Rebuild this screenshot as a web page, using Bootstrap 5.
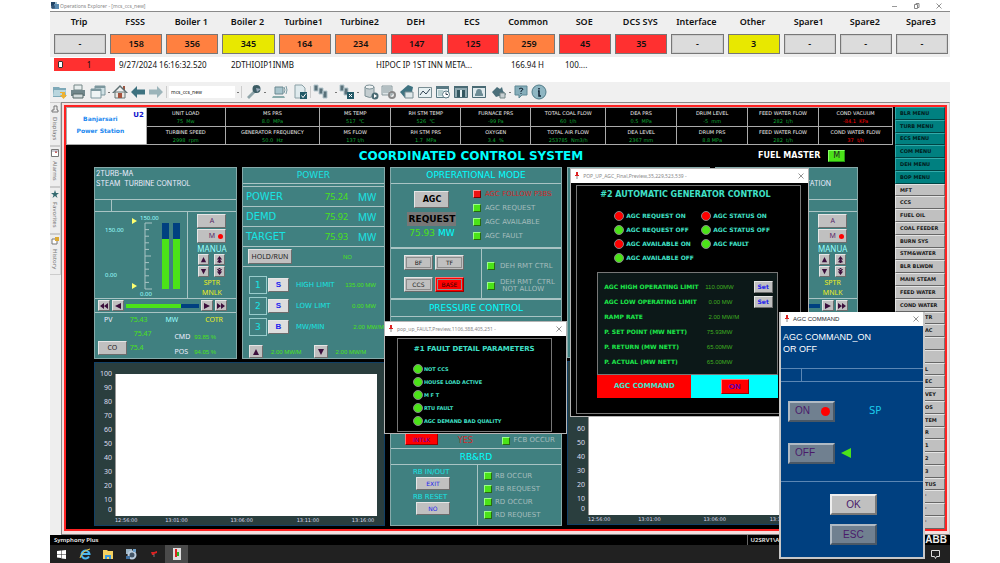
<!DOCTYPE html>
<html lang="en">
<head>
<meta charset="utf-8">
<meta name="viewport" content="width=device-width, initial-scale=1">
<title>Operations Explorer - [mcs_ccs_new]</title>
<link href="https://cdn.jsdelivr.net/npm/bootstrap@5.3.0/dist/css/bootstrap.min.css" rel="stylesheet">
<style>
body{background:#fff;font-family:"Noto Sans","Open Sans",sans-serif;font-size:7px;line-height:10px;color:#111}
svg{display:block;flex:none}
button{font:inherit;padding:0;cursor:pointer}
.app{width:90%;margin:0 auto;position:relative}
.nw{white-space:nowrap}
.vd{font-family:"DejaVu Sans",sans-serif}
.ar{font-family:"Liberation Sans",Arial,sans-serif}
.f5{font-size:5px}.f6{font-size:6px}.f7{font-size:7px}.f8{font-size:8px}.f9{font-size:9px}.f10{font-size:10px}.f12{font-size:12px}
.cy{color:#0ff}.cy2{color:#18e4e4}.pale{color:#9ff}.gn{color:#4be318}.ye{color:#ee2}.gy{color:#a5bdbd}.wt{color:#eef}
/* window chrome */
.titlebar{height:12px;border-bottom:1px solid #8a8a8a;color:#888}
.alarms{display:grid;grid-template-columns:repeat(16,minmax(0,1fr));background:#efefef;height:45px;padding-left:2px}
.alarm-label{height:20px;line-height:20px;font-size:9px;font-weight:600;color:#111;padding-right:2px}
.alarm-key{width:calc(100% - 4px);height:20px;border:1px solid #777;outline:1px solid #ccc;outline-offset:-2px;font-size:9px;font-weight:600;background:#dcdcdc;margin-top:2px;color:#111}
.or{background:#ff8040;outline:0}.yl{background:#e8e800;outline:0}.rd{background:#ff3030;outline:0}
.alarm-line{display:grid;grid-template-columns:61fr 112fr 145fr 135fr 54fr 389fr;height:25px;padding:1px 0 0 4px;font-size:8px;line-height:13px;background:#fff}
.alarm-id{background:#ff3030;height:13px}
.alarm-id input{appearance:none;width:5px;height:7px;margin:0;border:1px solid #333;border-radius:1px;background:#fff}
.tools{height:20px;background:#f0f0f0;padding-left:2px;gap:2px}
.tools button{border:0;background:none;width:16px;height:16px;flex:none}
.tools input{width:66px;height:12px;border:0;background:#fff;font-size:5px;padding:0 2px;color:#222}
.tools .sp{margin-left:2px}
.caret{width:2px;height:1px;background:#777}
.rule{width:1px;height:12px;background:#ccc}
/* side tabs and page frame */
.side{width:11px;background:#eee;color:#8a8a8a}
.side a{writing-mode:vertical-rl;color:#777;text-decoration:none;font-size:6px;border:1px solid #ccc;border-left:0;line-height:8px;padding:2px 0 5px}
.frame{border:1px solid #888;border-right-color:#ccc;background:#f4dede;padding:2px 2px 3px}
.redline{border:2px solid #f22;background:#000}
.board{margin-right:2px}
.readings{display:grid;grid-template-columns:80fr 79fr 95fr 71fr 70fr 70fr 75fr 71fr 71fr 71fr 74fr;gap:1px;background:#aaa;height:38px;padding:1px}
.readings>div{background:#000;text-align:center;overflow:hidden}
.readings .pair{display:grid;grid-template-rows:1fr 1fr;gap:1px;background:#aaa}
.pair>div{background:#000;font-size:5px;line-height:8px;color:#eee;padding-top:1px}
.pair b{display:block;font-weight:400;color:#10a836;font-size:5px}
.pair b.neg{color:#f00}
.readings>.station{background:#fff;color:#1a88f0;font-weight:700;font-size:6px;position:relative;line-height:12px;padding-top:5px;padding-right:12px}
.station span{position:absolute;right:2px;top:1px;color:#11c;font-size:7px}
.menu{width:50px;flex:none}
.menu button{flex:1 1 0;border:1px solid;border-color:#e4e4e4 #777 #666 #e4e4e4;background:#c0c0c0;text-align:left;padding-left:4px;font:700 5px/9px "DejaVu Sans",sans-serif;color:#1a1a1a;min-height:0;white-space:nowrap}
.menu .grp{background:#008080;border-color:#3aa #055 #044 #3aa;color:#001c1c}
.menu .tail{padding-left:29px}
.heading-row{height:22px;display:grid;grid-template-columns:692fr 135fr;align-items:center}
.main-title{padding-left:118px}
.work{display:grid;grid-template-columns:291fr 172fr 291fr;gap:5px;padding:0 35px 3px 28px}
.duo{display:grid;grid-template-columns:1fr 1fr;gap:5px;margin-bottom:3px}
.teal{background:#408080;border:1px solid #86aaaa;min-width:0}
.ln{border-bottom:1px solid #a9c4c4}
.key{background:#c0c0c0;border:1px solid;border-color:#e6e6e6 #6c6c6c #6c6c6c #e6e6e6;color:#222;display:flex;align-items:center;justify-content:center;white-space:nowrap;flex:none}
.gomode{width:17px;height:12px;background:#4be318;border-color:#8f6 #291 #291 #8f6;font:8px/8px "DejaVu Sans",sans-serif}
.plum{color:#5a2a6a}
.k11{width:12px;height:11px}
/* turbine station */
.st-head{height:32px;padding:1px;font-family:Inter,sans-serif;font-size:7px;color:#eef}
.st-tag{height:12px}
.st-tag i{display:block;width:17px;height:100%;border-right:1px solid #a9c4c4}
.st-body{height:87px;display:grid;grid-template-columns:92fr 50fr}
.st-keys{border-left:1px solid #a9c4c4;padding-top:2px}
.mk{width:29px;height:14px;position:relative}
.mk i{position:absolute;right:2px;width:5px;height:5px;border-radius:50%;background:red}
.mk+.mk{margin:1px 0}
.arrows{display:grid;grid-template-columns:11px 11px;gap:1px 5px;margin-bottom:1px}
.arrows .key{height:11px}
.st-slide{height:14px;padding:0 9px 0 3px;gap:2px}
.slide{height:4px;background:#004080}
.slide i{display:block;height:4px;background:#4be318;width:76%}
.st-foot{height:44px;display:grid;grid-template-columns:35fr 36fr 40fr 31fr;grid-template-rows:14px 14px 14px;align-items:center}
.st-foot .wt{padding-left:9px}
.co{width:29px;height:14px;margin-left:3px}
.row2{padding-top:6px}.row3{padding-top:8px}
.sm{margin-left:-11px}
/* power */
.pt{height:16px;line-height:14px}
.gapline{height:3px}
.pw-row{display:grid;grid-template-columns:82fr 34fr 27fr;align-items:center;padding-left:3px;height:20px}
.num,.mw{font-family:"Noto Sans",sans-serif;font-size:9px}
.mw{font-size:10px}
.hold{width:44px;height:15px;margin-left:2px;font-family:"Noto Sans",sans-serif;font-size:7px}
.nos{margin-left:-15px}
.lims{padding-top:7px}
.lim{display:grid;grid-template-columns:19px 21px 7px 1fr auto;align-items:center;height:21px;padding-left:6px}
.lim>i{font-style:normal;border:1px solid #9cc;width:18px;height:18px;line-height:17px;text-align:center;display:block}
.sk{width:21px;height:14px;background:#ddd;color:#22e;font:700 8px "Liberation Sans",sans-serif}
.ramp{padding:8px 0 0 6px;gap:8px}
.rk{width:14px;height:13px}
.ramp span+.rk{margin-left:4px}
/* mode panel */
.led{width:8px;height:8px;background:#4be318;border:1px solid;border-color:#9f8 #286a10 #286a10 #9f8;display:block;flex:none}
.led.hot{background:#e11;border-color:#f99 #700 #700 #f99}
.dot{width:10px;height:10px;border-radius:50%;background:#4be318;border:1px solid #888;display:block;flex:none}
.dot.hot{background:red}
.alert-red{color:#d02828}
.insk{width:29px;height:15px;outline:1px solid #8d8d8d;outline-offset:-3px}
.redk{background:red;color:#300;border-color:#f77 #900 #900 #f77}
.modes{height:65px;display:grid;grid-template-columns:82fr 88fr;border-bottom-width:2px}
.agc{width:35px;height:17px;margin-top:7px;margin-bottom:4px;color:#000}
.req{background:#777;border:0;color:#000;width:49px;height:14px;margin-bottom:2px}
.leds{display:grid;grid-template-columns:12px 1fr;align-content:start;align-items:center;grid-auto-rows:14px;font-size:7px;color:#a5bdbd;padding-top:3px}
.split{height:51px;display:grid;grid-template-columns:91fr 79fr;border-bottom-width:2px}
.quad{display:grid;grid-template-columns:29px 29px;grid-auto-rows:15px;gap:7px 2px;padding:6px 0 0 13px;border-right:1px solid #a9c4c4}
.quad .key{font-size:6px}
.leds2{display:grid;grid-template-columns:13px 1fr;align-items:center;padding:7px 0 0 5px;font-size:7px;line-height:7px;color:#a5bdbd;grid-auto-rows:20px;align-content:start}
.pc{height:17px;line-height:17px}
.hid{height:132px;display:grid;grid-template-columns:58fr 48fr 12px 52fr;align-items:end;padding:0 0 3px 14px;line-height:9px}
.ik{width:33px;height:12px;font-size:6px;color:#50b}
.rbt{height:16px;line-height:16px}
.rb{display:grid;grid-template-columns:87fr 83fr}
.rb-keys{padding:3px 0 0 22px;line-height:9px;border-right:1px solid #a9c4c4}
.bk{width:34px;height:13px;color:#22e;font-size:6px;margin-left:3px}
.rs{margin-top:3px}
.leds3{display:grid;grid-template-columns:11px 1fr;grid-auto-rows:13px;align-items:center;padding:4px 0 0 6px;font-size:7px;color:#a5bdbd}
/* trend chart */
.trend{background:#2a3e3e;border:1px solid #124066;height:164px;display:grid;grid-template-columns:20px 1fr 7px;grid-template-rows:11px 142px 9px;color:#dde}
.trend ol{list-style:none;margin:-7px 0 0;padding:0 3px 0 0;text-align:right;font-size:7px}
.trend li{height:14px;line-height:14px}
.trend li:last-child{height:5px;line-height:5px}
.plot{background:#fff;border-left:1px solid #999}
.times{display:grid;grid-template-columns:50fr 65fr 66fr 55fr 25fr;grid-column:2;font-size:5px;line-height:9px}
/* floating windows */
.pop{position:absolute;border:1px solid #b5b5b5;background:#000;z-index:3}
.pop-bar{background:#fff;color:#888;font-size:6px;padding:0 4px;height:14px}
.pop-bar button{border:0;background:none}
.inner{border:1px solid #777}
.aq{color:#40e0c8;font-weight:700}
.win-agc{left:57.8%;top:168px;width:26.5%;height:249px}
.win-fault{left:37.1%;top:321px;width:20.3%;height:113px}
.win-cmd{left:81%;top:312px;width:16.2%;height:247px;background:#004080;border:2px solid #c8c8c8;border-top-width:0;z-index:4}
.agcbox{margin:2px 7px 0 5px;height:229px}
.agct{margin-top:4px;padding-right:6px}
.lamps{display:grid;grid-template-columns:12px 75px 12px 1fr;grid-auto-rows:14px;align-items:center;padding:9px 0 0 37px;height:81px;align-content:start}
.limbox{margin:-9px 22px 0 20px;height:103px;padding:6px 4px 0 6px}
.limits{background:#0c1818;color:#1de84a;font-weight:700}
.limits td{padding:0;height:15px;line-height:14px}
.limits td+td{color:#3fae20;font-weight:400}
.limits td:first-child{width:101px}
.limits td:last-child{width:19px}
.setk{width:19px;height:12px;color:#22e;font:700 6px "DejaVu Sans",sans-serif}
.cmdrow{display:grid;grid-template-columns:94fr 86fr;height:23px;margin:0 22px 0 20px;text-align:center;line-height:22px}
.cmd-name{background:red}
.cmd-state{background:#0ff;display:flex;align-items:center;justify-content:center}
.onk{width:28px;height:15px;color:#50b}
.fbox{margin:2px 14px 0 12px;height:94px}
.ft{margin-top:5px}
.flamps{display:grid;grid-template-columns:11px 1fr;grid-auto-rows:13px;align-items:center;padding:8px 0 0 15px}
.ct{line-height:12px;padding:5px 0 0 2px;height:42px}
.ctag{height:14px;border:solid #5a86b4;border-width:1px 0}
.ctag i{display:block;width:21px;height:100%;border-right:1px solid #5a86b4}
.cbody{height:100px;display:grid;grid-template-columns:53px 1fr;grid-auto-rows:42px;align-items:center;align-content:start;padding:8px 0 0 7px;border-bottom:1px solid #5a86b4;color:#1cc8e8;font-size:10px}
.cbody span{padding-left:28px}
.big{width:47px;height:21px;font-size:10px;color:#4a1a6a;background:#708090;border-width:2px;border-color:#b0bac4 #4a5866 #4a5866 #b0bac4}
.cbody .big{justify-content:flex-start;padding-left:5px}
.big .dot{margin-left:11px;width:9px;height:9px}
.cend{gap:9px;padding:12px 0 0 3px}
.okk{background:#c0c0c0;border-color:#eee #777 #777 #eee}
/* status line and taskbar */
.status{height:10px;background:#000;color:#eee;font-size:6px;font-weight:600}
.srv{margin-left:auto;margin-right:146px;border-left:1px solid #666;padding-left:3px}
.abb{font-weight:700;font-size:10px;padding-right:3px}
.taskbar{height:19px;background:#212121}
.taskbar button{width:23px;height:19px;border:0;border-bottom:1px solid #6ab0ea;background:none;display:flex;align-items:center;justify-content:center}
.taskbar .on{background:#4a4a4a}
</style>
</head>
<body>
<svg width="0" height="0" class="position-absolute" aria-hidden="true">
<symbol id="up" viewBox="0 0 8 8"><path d="M4 1 7 7H1z" fill="#3c0f3c"/></symbol>
<symbol id="dn" viewBox="0 0 8 8"><path d="M4 7 7 1H1z" fill="#3c0f3c"/></symbol>
<symbol id="up2" viewBox="0 0 8 8"><path d="M4 0 7 4H1zM4 3 7 7H1zM3 6h2v2H3z" fill="#3c0f3c"/></symbol>
<symbol id="dn2" viewBox="0 0 8 8"><path d="M4 8 7 4H1zM4 5 7 1H1zM3 0h2v2H3z" fill="#3c0f3c"/></symbol>
<symbol id="lt" viewBox="0 0 8 8"><path d="M1 4 7 1v6z" fill="#3c0f3c"/></symbol>
<symbol id="rt" viewBox="0 0 8 8"><path d="M7 4 1 1v6z" fill="#3c0f3c"/></symbol>
<symbol id="lt2" viewBox="0 0 8 8"><path d="M0 4 4 1v6zM4 4 8 1v6z" fill="#3c0f3c"/></symbol>
<symbol id="rt2" viewBox="0 0 8 8"><path d="M8 4 4 1v6zM4 4 0 1v6z" fill="#3c0f3c"/></symbol>
<symbol id="x" viewBox="0 0 6 6"><path d="M.5.5 5.5 5.5M5.5.5.5 5.5" stroke="#777" stroke-width=".8"/></symbol>
<symbol id="pin" viewBox="0 0 4 8"><path d="M1 0h2v3h1v1H0V3h1z" fill="#d22"/><path d="M2 4v3" stroke="#888"/></symbol>
<symbol id="gauge" viewBox="0 0 92 86">
<path d="M57 11H50V77H57M50 17.600h4M50 24.200h4M50 30.800h4M50 37.400h4M50 44h6M50 50.600h4M50 57.200h4M50 63.800h4M50 70.400h4" fill="none" stroke="#a9c4c4"/>
<path d="M37 6v6l5-3zM37 71v6l5-3z" fill="#ffff70"/>
<path d="M67 11h7v66h-7zM78 11h7v66h-7z" fill="#004080"/><path d="M67 27h7v50h-7zM78 27h7v50h-7z" fill="#4be318"/>
</symbol>
</svg>

<div class="app" id="app">
<header>
 <div class="titlebar d-flex align-items-center nw pe-2">
  <svg width="10" height="9" viewBox="0 0 10 9"><path d="M1 1h4v4H1z" fill="#246"/><path d="M4 3h5v5H4z" fill="#5a8ab0"/><circle cx="3" cy="6" r="2" fill="#357"/><path d="M5 1h2v2H5z" fill="#9bc"/></svg>
  <span class="f5">Operations Explorer - [mcs_ccs_new]</span>
  <span class="ms-auto d-flex gap-3 align-items-center"><svg width="6" height="6"><path d="M0 3.500h5" stroke="#999"/></svg><svg width="6" height="6"><path d="M.5 1.500h3v4h-3zM2 1.500v-1h3v4H4" fill="none" stroke="#888"/></svg><svg width="6" height="6"><use href="#x"/></svg></span>
 </div>
 <div class="alarms text-center">
  <div><div class="alarm-label">Trip</div><button class="alarm-key">-</button></div>
  <div><div class="alarm-label">FSSS</div><button class="alarm-key or">158</button></div>
  <div><div class="alarm-label">Boiler 1</div><button class="alarm-key or">356</button></div>
  <div><div class="alarm-label">Boiler 2</div><button class="alarm-key yl">345</button></div>
  <div><div class="alarm-label">Turbine1</div><button class="alarm-key or">164</button></div>
  <div><div class="alarm-label">Turbine2</div><button class="alarm-key or">234</button></div>
  <div><div class="alarm-label">DEH</div><button class="alarm-key rd">147</button></div>
  <div><div class="alarm-label">ECS</div><button class="alarm-key rd">125</button></div>
  <div><div class="alarm-label">Common</div><button class="alarm-key or">259</button></div>
  <div><div class="alarm-label">SOE</div><button class="alarm-key rd">45</button></div>
  <div><div class="alarm-label">DCS SYS</div><button class="alarm-key rd">35</button></div>
  <div><div class="alarm-label">Interface</div><button class="alarm-key">-</button></div>
  <div><div class="alarm-label">Other</div><button class="alarm-key yl">3</button></div>
  <div><div class="alarm-label">Spare1</div><button class="alarm-key">-</button></div>
  <div><div class="alarm-label">Spare2</div><button class="alarm-key">-</button></div>
  <div><div class="alarm-label">Spare3</div><button class="alarm-key">-</button></div>
 </div>
 <div class="alarm-line nw">
  <label class="alarm-id d-flex align-items-center ps-1"><input type="checkbox" class="flex-shrink-0"><span class="flex-fill text-center">1</span></label>
  <span class="ps-1">9/27/2024 16:16:32.520</span><span class="ps-1">2DTHIOIP1INMB</span><span class="ps-1">HIPOC IP 1ST INN META...</span><span class="ps-1">166.94 H</span><span class="ps-1">100....</span>
 </div>
 <div class="tools d-flex align-items-center">
  <button aria-label="Open"><svg width="16" height="16"><path d="M1 3h6l1 1h6v9H1z" fill="#7ea9b8"/><path d="M2 6h12l-1 6H1z" fill="#b9d6de"/><path d="M8 8h5v3h2l-3.500 4L8 11h2V9H8z" fill="#eeb030"/></svg></button>
  <button aria-label="Print"><svg width="16" height="16"><path d="M4 1h8v5H4z" fill="#e8eeee" stroke="#788"/><path d="M1 6h14v6H1z" fill="#71868a"/><path d="M3 10h10v4H3z" fill="#d5dddd" stroke="#566"/></svg></button>
  <button aria-label="Windows" class="sp"><svg width="16" height="16"><path d="M5 2h10v9H5z" fill="#cfe0e4" stroke="#7c979e"/><path d="M1 5h10v9H1z" fill="#eef4f5" stroke="#7c979e"/><path d="M1 5h10v2H1zM5 2h10v2H5z" fill="#7c979e"/></svg></button><i class="caret"></i>
  <button aria-label="Home"><svg width="16" height="16"><path d="M3 8h10v6H3z" fill="#e8e6e2" stroke="#677"/><path d="M11 2h2v4h-2z" fill="#9a5540"/><path d="M8 1 0 9h2l6-6 6 6h2z" fill="#5d6f72"/><path d="M6 9h4v5H6z" fill="#a5523c"/></svg></button>
  <button aria-label="Back"><svg width="16" height="16"><path d="M1 8l6-6v3.500h8v5H7V14z" fill="#3e7280"/></svg></button>
  <button aria-label="Forward"><svg width="16" height="16"><path d="M15 8 9 2v3.500H1v5h8V14z" fill="#9cb4ba"/></svg></button><i class="rule"></i>
  <input type="text" value="mcs_ccs_new" aria-label="Display"><i class="caret"></i><i class="rule"></i>
  <button aria-label="Tools" class="sp"><svg width="16" height="16"><path d="M1 13 8 6l2 2-7 7z" fill="#8fa5aa"/><circle cx="10.500" cy="5" r="4" fill="#3c5c64"/><path d="M10 4l5 1-4 3z" fill="#9ab"/></svg></button><i class="caret"></i>
  <button aria-label="Terminal" class="ms-1"><svg width="16" height="16"><path d="M3 3h8v7H3z" fill="#a8c4cc" stroke="#6a8890"/><path d="M1 12h11l1 2H0z" fill="#8aa"/><path d="M12 3q2 3 0 6M14 2q2 4 0 8" stroke="#7a9aa2" fill="none"/></svg></button>
  <button aria-label="Document check" class="sp"><svg width="16" height="16"><path d="M3 1h7l3 3v10H3z" fill="#dfeaed" stroke="#8aa0a6"/><path d="M8 8h7v7H8z" fill="#235a68"/><path d="m9.500 11.500 1.500 2 3-4" stroke="#fff" fill="none"/></svg></button><i class="rule"></i>
  <button aria-label="Tree"><svg width="16" height="16"><path d="M1 1h4v6H1zM6 4h4v6H6zM10 7h4v7h-4z" fill="#59717a" stroke="#b4c6cc"/></svg></button><i class="caret ms-1"></i>
  <button aria-label="Tree remove"><svg width="16" height="16"><path d="M1 1h4v6H1zM5 4h4v7H5z" fill="#59717a" stroke="#b4c6cc"/><path d="M8 8h7v7H8z" fill="#235a68"/><path d="m10 10 3 3m0-3-3 3" stroke="#fff"/></svg></button><i class="caret"></i>
  <button aria-label="Database" class="sp"><svg width="16" height="16"><path d="M2 3v9q5 3 9 0V3z" fill="#c3cdd0" stroke="#7a8e94"/><ellipse cx="6.500" cy="3" rx="4.500" ry="2" fill="#eef2f3" stroke="#7a8e94"/><circle cx="12" cy="12" r="3.500" fill="#4a6a72"/><path d="M11 10v4l3-2z" fill="#fff"/></svg></button>
  <button aria-label="Settings list"><svg width="16" height="16"><path d="M1 2h10v9H1z" fill="#dde4e6" stroke="#8a9a9e"/><path d="M2 4h8M2 6h8M2 8h6" stroke="#8a9a9e"/><circle cx="11" cy="11" r="3" fill="none" stroke="#888" stroke-width="2"/></svg></button>
  <button aria-label="Tags"><svg width="16" height="16"><path d="M1 8 9 1l5 2-1 5-7 6z" fill="#3e7280"/><path d="M6 8h8v6H6z" fill="#dfe8ea" stroke="#7a8e94"/></svg></button>
  <button aria-label="Trend"><svg width="16" height="16"><path d="M1.500 3.500h13v10h-13z" fill="#e6f0f2" stroke="#7a8e94"/><path d="m3 11 3-4 3 3 4-5" stroke="#345" fill="none"/></svg></button>
  <button aria-label="Event list"><svg width="16" height="16"><path d="M1.500 2.500h12v11h-12z" fill="#e6f0f2" stroke="#5a7a84"/><path d="M1 2h13v3H1z" fill="#5a7a84"/><path d="M3 7h5M3 9h4M3 11h4" stroke="#8aa"/><circle cx="11" cy="10.500" r="3.500" fill="#fff" stroke="#5a7a84"/><path d="M11 8.500v2h2" stroke="#345" fill="none"/></svg></button>
  <button aria-label="System"><svg width="16" height="16"><path d="M1.500 2.500h13v11h-13z" fill="#8fa9b1" stroke="#4a6a74"/><path d="M1 2h14v2H1z" fill="#4a6a74"/><path d="M4 6h8v7H4z" fill="#33565f"/><path d="M7 6h2v7H7z" fill="#e6f0f2"/></svg></button>
  <button aria-label="Alarm page"><svg width="16" height="16"><path d="M1.500 2.500h13v11h-13z" fill="#dfe9ec" stroke="#4a6a74"/><path d="M1 2h14v2H1z" fill="#4a6a74"/><path d="M4 12v-2l1-1q0-4 3-4t3 4l1 1v2z" fill="#6d8c95"/></svg></button>
  <button aria-label="Plugin" class="sp"><svg width="16" height="16"><path d="M1 8 6 3l3 2 2-2 1 4 3 3-3 4-4-2-3 1z" fill="#4a6f7a"/><path d="M9 9h5v5H9z" fill="#c6cfd2" stroke="#788"/></svg></button><i class="caret"></i>
  <button aria-label="Help"><svg width="16" height="16"><path d="M2 2h12v9H9l-3 3v-3H2z" fill="#86aebb" stroke="#5d8794"/><path d="M6 5q2-2 4 0 0 1-2 2v1M8 9v1" stroke="#123" fill="none"/></svg></button>
  <button aria-label="Info"><svg width="16" height="16"><circle cx="8" cy="8" r="7" fill="#8fb6c2" stroke="#4f7b88"/><path d="M8 4v1.500M7 7h1v5h2" stroke="#123" fill="none" stroke-width="1.500"/></svg></button>
 </div>
</header>

<main class="d-flex">
 <nav class="side d-flex flex-column">
  <a href="#displays" class="d-flex align-items-center gap-1"><svg width="8" height="8"><path d="M1 7V5h2V1h3v4h1v2z" fill="none" stroke="#777"/></svg>Displays</a>
  <a href="#alarms" class="d-flex align-items-center gap-1"><svg width="8" height="8"><path d="M.5.5h7v7h-7z" fill="#fff" stroke="#777"/><path d="M4 2h2v2H4z" fill="#c66"/><path d="M1 2h6" stroke="#99a"/></svg>Alarms</a>
  <a href="#favorites" class="d-flex align-items-center gap-1"><svg width="8" height="8"><path d="m4 0 1 3h3L5.500 5l1 3L4 6 1.500 8l1-3L0 3h3z" fill="#356a70"/></svg>Favorites</a>
  <a href="#history" class="d-flex align-items-center gap-1"><svg width="8" height="8"><path d="M1 2h5v5H1z" fill="#fff" stroke="#777"/><path d="M4 0h4v4H4z" fill="#da3"/></svg>History</a>
 </nav>
 <div class="frame flex-fill">
 <div class="redline d-flex">
 <div class="flex-fill board">
  <div class="readings nw vd">
   <div class="station">Banjarsari<br>Power Station<span>U2</span></div>
   <div class="pair"><div>UNIT LOAD<b>75 &nbsp;Mw</b></div><div>TURBINE SPEED<b>2998 &nbsp;rpm</b></div></div>
   <div class="pair"><div>MS PRS<b>8.0 &nbsp;MPa</b></div><div>GENERATOR FREQUENCY<b>50.0 &nbsp;Hz</b></div></div>
   <div class="pair"><div>MS TEMP<b>517 &nbsp;℃</b></div><div>MS FLOW<b>137 t/h</b></div></div>
   <div class="pair"><div>RH STM TEMP<b>526 &nbsp;℃</b></div><div>RH STM PRS<b>1.7 &nbsp;MPa</b></div></div>
   <div class="pair"><div>FURNACE PRS<b>-99 Pa</b></div><div>OXYGEN<b>3.4 &nbsp;%</b></div></div>
   <div class="pair"><div>TOTAL COAL FLOW<b>60 &nbsp;t/h</b></div><div>TOTAL AIR FLOW<b>253785 &nbsp;Nm3/h</b></div></div>
   <div class="pair"><div>DEA PRS<b>0.5 &nbsp;MPa</b></div><div>DEA LEVEL<b>2367 mm</b></div></div>
   <div class="pair"><div>DRUM LEVEL<b>-5 &nbsp;mm</b></div><div>DRUM PRS<b>8.8 MPa</b></div></div>
   <div class="pair"><div>FEED WATER FLOW<b>282 &nbsp;t/h</b></div><div>FEED WATER FLOW<b>282 &nbsp;t/h</b></div></div>
   <div class="pair"><div>COND VACUUM<b class="neg">-84.1 &nbsp;KPa</b></div><div>COND WATER FLOW<b class="neg">37 &nbsp;t/h</b></div></div>
  </div>
  <div class="heading-row nw vd fw-bold">
   <div class="cy text-center f12 main-title">COORDINATED CONTROL SYSTEM</div>
   <div class="d-flex align-items-center f8 text-white gap-2"><span>FUEL MASTER</span><button class="key gomode">M</button></div>
  </div>
  <div class="work">
   <div>
    <div class="duo">
     <section class="teal">
      <div class="st-head ln nw">2TURB-MA<br>STEAM &nbsp;TURBINE CONTROL</div>
      <div class="st-tag ln"><i></i></div>
      <div class="st-body ln">
       <div><svg width="92" height="86"><use href="#gauge"/><g font-size="6" fill="#9ff"><text x="45" y="8">150.00</text><text x="10" y="20">150.00</text><text x="10" y="65">0.00</text><text x="45" y="84">0.00</text></g></svg></div>
       <div class="st-keys d-flex flex-column align-items-center nw">
        <button class="key plum f7 mk">A</button><button class="key plum f7 mk">M<i></i></button>
        <span class="pale f8">MANUA</span>
        <div class="arrows"><button class="key" aria-label="Up"><svg width="7" height="7"><use href="#up"/></svg></button><button class="key" aria-label="Fast up"><svg width="7" height="7"><use href="#up2"/></svg></button><button class="key" aria-label="Down"><svg width="7" height="7"><use href="#dn"/></svg></button><button class="key" aria-label="Fast down"><svg width="7" height="7"><use href="#dn2"/></svg></button></div>
        <span class="ye f7">SPTR</span><span class="ye f7">MNLK</span>
       </div>
      </div>
      <div class="st-slide ln d-flex align-items-center"><button class="key k11" aria-label="Fast left"><svg width="8" height="8"><use href="#lt2"/></svg></button><button class="key k11" aria-label="Left"><svg width="8" height="8"><use href="#lt"/></svg></button><div class="slide flex-fill"><i></i></div><button class="key k11" aria-label="Right"><svg width="8" height="8"><use href="#rt"/></svg></button><button class="key k11" aria-label="Fast right"><svg width="8" height="8"><use href="#rt2"/></svg></button></div>
      <div class="st-foot nw f7">
       <span class="wt">PV</span><span class="gn">75.43</span><span class="pale">MW</span><span class="ye">COTR</span>
       <span></span><span class="gn ps-1">75.47</span><span class="wt row2">CMD</span><span class="gn f6 ar sm row2">93.85 %</span>
       <button class="key f7 co">CO</button><span class="gn">75.4</span><span class="wt row3">POS</span><span class="gn f6 ar sm row3">94.05 %</span>
      </div>
     </section>
     <section class="teal nw vd cy2">
      <div class="ln text-center f9 pt">POWER</div><div class="ln gapline"></div>
      <div class="pw-row ln f10"><span>POWER</span><span class="gn num">75.24</span><span class="mw">MW</span></div>
      <div class="pw-row ln f10"><span>DEMD</span><span class="gn num">75.92</span><span class="mw">MW</span></div>
      <div class="pw-row ln f10"><span>TARGET</span><span class="gn num">75.93</span><span class="mw">MW</span></div>
      <div class="pw-row ln f6"><button class="key hold">HOLD/RUN</button><span></span><span class="gn ar nos">NO</span></div>
      <div class="lims">
      <div class="lim f6"><i class="f9">1</i><button class="key sk">S</button><span></span><span class="f7">HIGH LIMIT</span><span class="gn ar pe-2">135.00 MW</span></div>
      <div class="lim f6"><i class="f9">2</i><button class="key sk">S</button><span></span><span class="f7">LOW LIMT</span><span class="gn ar pe-2">0.00 MW</span></div>
      <div class="lim f6"><i class="f9">3</i><button class="key sk">B</button><span></span><span class="f7">MW/MIN</span><span class="gn ar">2.00 MW/M</span></div>
      </div>
      <div class="d-flex align-items-center f6 gn ar ramp"><button class="key rk" aria-label="Raise"><svg width="8" height="8"><use href="#up"/></svg></button><span>2.00 MW/M</span><button class="key rk" aria-label="Lower"><svg width="8" height="8"><use href="#dn"/></svg></button><span>2.00 MW/M</span></div>
     </section>
    </div>
    <div class="trend"><div></div><div></div><div></div>
     <ol><li>100</li><li>90</li><li>80</li><li>70</li><li>60</li><li>50</li><li>40</li><li>30</li><li>20</li><li>10</li><li>0</li></ol><div class="plot"></div><div></div>
     <div class="times vd"><span>12:56:00</span><span>13:01:00</span><span>13:06:00</span><span>13:11:00</span><span>13:16:00</span></div></div>
   </div>

   <section class="teal nw d-flex flex-column vd">
    <div class="ln text-center f9 cy pt">OPRERATIONAL MODE</div>
    <div class="ln modes">
     <div class="d-flex flex-column align-items-center"><button class="key f8 fw-bold agc">AGC</button><button class="req f9 fw-bold">REQUEST</button><span class="cy f9"><span class="gn">75.93</span> MW</span></div>
     <div class="leds"><span class="led hot"></span><span class="alert-red">AGC FOLLOW P3BS</span><span class="led"></span><span>AGC REQUEST</span><span class="led"></span><span>AGC AVAILABLE</span><span class="led"></span><span>AGC FAULT</span></div>
    </div>
    <div class="ln split">
     <div class="quad"><button class="key insk">BF</button><button class="key insk">TF</button><button class="key insk">CCS</button><button class="key insk redk">BASE</button></div>
     <div class="leds2"><span class="led"></span><span>DEH RMT CTRL</span><span class="led"></span><span>DEH RMT &nbsp;CTRL<br>&nbsp;NOT ALLOW</span></div>
    </div>
    <div class="ln text-center f9 cy pc">PRESSURE CONTROL</div>
    <div class="ln hid"><button class="key ik redk">INTLK</button><span class="alert-red f8">YES</span><span class="led"></span><span class="gy f7">FCB OCCUR</span></div>
    <div class="ln text-center f9 cy rbt">RB&amp;RD</div>
    <div class="rb flex-fill">
     <div class="d-flex flex-column cy2 f7 rb-keys"><span>RB IN/OUT</span><button class="key bk">EXIT</button><span class="rs">RB RESET</span><button class="key bk">NO</button></div>
     <div class="leds3"><span class="led"></span><span>RB OCCUR</span><span class="led"></span><span>RB REQUEST</span><span class="led"></span><span>RD OCCUR</span><span class="led"></span><span>RD REQUEST</span></div>
    </div>
   </section>

   <div>
    <div class="duo">
     <section class="teal"></section>
     <section class="teal">
      <div class="st-head ln nw text-end pe-4"><br>STATION&nbsp;</div>
      <div class="st-tag ln"></div>
      <div class="st-body ln">
       <div></div>
       <div class="st-keys d-flex flex-column align-items-center nw">
        <button class="key plum f7 mk">A</button><button class="key plum f7 mk">M<i></i></button>
        <span class="pale f8">MANUA</span>
        <div class="arrows"><button class="key" aria-label="Up"><svg width="7" height="7"><use href="#up"/></svg></button><button class="key" aria-label="Fast up"><svg width="7" height="7"><use href="#up2"/></svg></button><button class="key" aria-label="Down"><svg width="7" height="7"><use href="#dn"/></svg></button><button class="key" aria-label="Fast down"><svg width="7" height="7"><use href="#dn2"/></svg></button></div>
        <span class="ye f7">SPTR</span><span class="ye f7">MNLK</span>
       </div>
      </div>
      <div class="st-slide ln d-flex align-items-center"><div class="slide flex-fill"></div><button class="key k11" aria-label="Right"><svg width="8" height="8"><use href="#rt"/></svg></button><button class="key k11" aria-label="Fast right"><svg width="8" height="8"><use href="#rt2"/></svg></button></div>
      <div class="st-foot"></div>
     </section>
    </div>
    <div class="trend"><div></div><div></div><div></div>
     <ol><li>100</li><li>90</li><li>80</li><li>70</li><li>60</li><li>50</li><li>40</li><li>30</li><li>20</li><li>10</li><li>0</li></ol><div class="plot"></div><div></div>
     <div class="times vd"><span>12:56:00</span><span>13:01:00</span><span>13:06:00</span><span>13:11:00</span><span></span></div></div>
   </div>
  </div>
 </div>
 <nav class="menu d-flex flex-column">
  <button class="grp">BLR MENU</button><button class="grp">TURB MENU</button><button class="grp">ECS MENU</button><button class="grp">COM MENU</button><button class="grp">DEH MENU</button><button class="grp">BOP MENU</button>
  <button>MFT</button><button>CCS</button><button>FUEL OIL</button><button>COAL FEEDER</button><button>BURN SYS</button><button>STM&amp;WATER</button><button>BLR BLWDN</button><button>MAIN STEAM</button><button>FEED WATER</button><button>COND WATER</button>
  <button class="tail">TR</button><button class="tail">AC</button><button class="tail" aria-label="Menu 19"></button><button class="tail" aria-label="Menu 20"></button><button class="tail">L</button><button class="tail">EC</button><button class="tail">VEY</button><button class="tail">OS</button><button class="tail">TEM</button><button class="tail">R</button><button class="tail">1</button><button class="tail">2</button><button class="tail">3</button><button class="tail">TUS</button><button class="tail">'</button><button class="tail">'</button><button class="tail">'</button>
 </nav>
 </div>
 </div>
</main>

<footer>
 <div class="status d-flex align-items-center nw"><span class="ps-1">Symphony Plus</span><span class="srv">U2SRV1\A</span><span class="abb ar">ABB</span></div>
 <div class="taskbar d-flex align-items-center">
  <button aria-label="Start" class="border-0"><svg width="9" height="9"><path d="M0 1l4-.5V4H0zM4.500.5 9 0v4H4.500zM0 4.500h4V8L0 7.500zM4.500 4.500H9V9L4.500 8.400z" fill="#fff"/></svg></button>
  <button aria-label="Internet Explorer"><svg width="12" height="12"><path d="M10 8.500a4 4 0 1 1 .5-2.500H3" fill="none" stroke="#4ab8f0" stroke-width="2"/><path d="M1 10Q3 3 11 1" stroke="#f0c840" fill="none"/></svg></button>
  <button aria-label="Files"><svg width="12" height="11"><path d="M1 1h4l1 1h5v8H1z" fill="#f4d060"/><path d="M3 6h6v4H7V8H5v2H3z" fill="#3a9adf"/></svg></button>
  <button aria-label="Operations"><svg width="12" height="12"><path d="M1 1h6v5H1z" fill="#9db6c8"/><circle cx="7" cy="7" r="3.500" fill="#456" stroke="#bcd" stroke-width="2"/><path d="M1 8h4v3H1z" fill="#3f6f9f"/><path d="M8 1h3v3H8z" fill="#6d9fc8"/></svg></button>
  <button aria-label="Connection"><svg width="10" height="10"><path d="M2 3h3l3-1v2L5 5v1H3z" fill="#d22"/><path d="M5 5v3" stroke="#777"/></svg></button>
  <button aria-label="Display" class="on"><svg width="10" height="12"><path d="M1 0h8v12H1z" fill="#ddd"/><path d="M3 1h2v8H3z" fill="#d22"/><path d="M5 4h2v4H5z" fill="#2b2"/></svg></button>
  <svg class="ms-auto me-2" width="14" height="12"><path d="M3.500 1.500h8v6h-3l-1 2-1-2h-3z" fill="none" stroke="#ddd"/></svg>
 </div>
</footer>

<section class="pop win-agc nw">
 <div class="pop-bar d-flex align-items-center gap-1"><svg width="4" height="8"><use href="#pin"/></svg><span class="f5">POP_UP_AGC_Final,Preview,35,229,523,539 -</span><button class="ms-auto" aria-label="Close"><svg width="6" height="6"><use href="#x"/></svg></button></div>
 <div class="inner vd aq agcbox">
  <div class="text-center f8 agct">#2 AUTOMATIC GENERATOR CONTROL</div>
  <div class="lamps f6"><i class="dot hot"></i><span>AGC REQUEST ON</span><i class="dot hot"></i><span>AGC STATUS ON</span><i class="dot"></i><span>AGC REQUEST OFF</span><i class="dot"></i><span>AGC STATUS OFF</span><i class="dot hot"></i><span>AGC AVAILABLE ON</span><i class="dot"></i><span>AGC FAULT</span><i class="dot"></i><span>AGC AVAILABLE OFF</span></div>
  <div class="limbox inner limits"><table class="w-100 f6">
   <tr><td>AGC HIGH OPERATING LIMIT</td><td class="ar">110.00MW</td><td><button class="key setk">Set</button></td></tr>
   <tr><td>AGC LOW OPERATING LIMIT</td><td class="ar">&nbsp; 0.00 MW</td><td><button class="key setk">Set</button></td></tr>
   <tr><td>RAMP RATE</td><td class="ar">&nbsp; 2.00 MW/M</td><td></td></tr>
   <tr><td>P. SET POINT (MW NETT)</td><td class="ar">&nbsp;75.93MW</td><td></td></tr>
   <tr><td>P. RETURN (MW NETT)</td><td class="ar">&nbsp;65.00MW</td><td></td></tr>
   <tr><td>P. ACTUAL (MW NETT)</td><td class="ar">&nbsp;65.00MW</td><td></td></tr>
  </table></div>
  <div class="cmdrow f7"><div class="cmd-name">AGC COMMAND</div><div class="cmd-state"><button class="key redk onk ar f8">ON</button></div></div>
 </div>
</section>

<section class="pop win-fault nw">
 <div class="pop-bar d-flex align-items-center gap-1"><svg width="4" height="8"><use href="#pin"/></svg><span class="f5">pop_up_FAULT,Preview,1106,388,405,251 -</span><button class="ms-auto" aria-label="Close"><svg width="6" height="6"><use href="#x"/></svg></button></div>
 <div class="inner vd aq fbox">
  <div class="text-center f7 ft">#1 FAULT DETAIL PARAMETERS</div>
  <div class="flamps f5"><i class="dot"></i><span>NOT CCS</span><i class="dot"></i><span>HOUSE LOAD ACTIVE</span><i class="dot"></i><span>M F T</span><i class="dot"></i><span>RTU FAULT</span><i class="dot"></i><span>AGC DEMAND BAD QUALITY</span></div>
 </div>
</section>

<section class="pop win-cmd nw ar">
 <div class="pop-bar d-flex align-items-center gap-1 text-dark"><svg width="4" height="8"><use href="#pin"/></svg><span>AGC COMMAND</span><button class="ms-auto" aria-label="Close"><svg width="6" height="6"><use href="#x"/></svg></button></div>
 <div class="text-white f9 ct">AGC COMMAND_ON<br>OR OFF</div>
 <div class="ctag"><i></i></div>
 <div class="cbody"><button class="key big">ON<i class="dot hot border-0"></i></button><span class="vd">SP</span><button class="key big">OFF</button><svg width="10" height="10"><path d="M0 5 10 0v10z" fill="#4be318"/></svg></div>
 <div class="d-flex flex-column align-items-center cend"><button class="key big okk">OK</button><button class="key big">ESC</button></div>
</section>
</div>
<script src="https://cdn.jsdelivr.net/npm/bootstrap@5.3.0/dist/js/bootstrap.bundle.min.js"></script>
</body>
</html>
